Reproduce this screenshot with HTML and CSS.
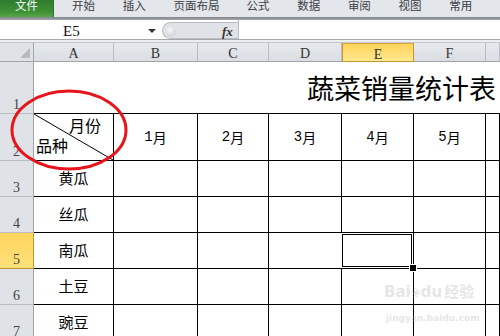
FILE: index.html
```html
<!DOCTYPE html>
<html lang="zh-CN">
<head>
    <meta charset="UTF-8">
    <title>蔬菜销量统计表</title>
    <link rel="stylesheet" href="styles.css">
</head>
<body>
    <div class="tabs">
        <div class="tab file">文件</div>
        <div class="tab">开始</div>
        <div class="tab">插入</div>
        <div class="tab wide">页面布局</div>
        <div class="tab">公式</div>
        <div class="tab">数据</div>
        <div class="tab">审阅</div>
        <div class="tab">视图</div>
        <div class="tab">常用</div>
    </div>
    <div class="sep"></div>
    <div class="fbar">
        <div class="namebox">E5<span class="arrow"></span></div>
        <div class="fxbox"><span class="knob"></span><span class="fx">fx</span></div>
        <div class="input"></div>
    </div>
    <div class="strip"></div>

    <div class="sheet">
        <div class="corner"><span class="tri"></span></div>
        <div class="ch">A</div>
        <div class="ch">B</div>
        <div class="ch">C</div>
        <div class="ch">D</div>
        <div class="ch on">E</div>
        <div class="ch">F</div>
        <div class="ch"></div>

        <div class="rh">1</div>
        <div class="titlecell">蔬菜销量统计表</div>

        <div class="rh">2</div>
        <div class="cell diag">
            <svg class="diagline" viewBox="0 0 100 100" preserveAspectRatio="none"><line x1="0" y1="0" x2="100" y2="100" stroke="#000" stroke-width="1" vector-effect="non-scaling-stroke"/></svg>
            <span class="d-top">月份</span>
            <span class="d-bot">品种</span>
        </div>
        <div class="cell hd"><span class="num">1</span>月</div>
        <div class="cell hd"><span class="num">2</span>月</div>
        <div class="cell hd"><span class="num">3</span>月</div>
        <div class="cell hd"><span class="num">4</span>月</div>
        <div class="cell hd"><span class="num">5</span>月</div>
        <div class="cell hd"></div>

        <div class="rh">3</div>
        <div class="cell lbl">黄瓜</div>
        <div class="cell"></div><div class="cell"></div><div class="cell"></div><div class="cell"></div><div class="cell"></div><div class="cell"></div>

        <div class="rh">4</div>
        <div class="cell lbl">丝瓜</div>
        <div class="cell"></div><div class="cell"></div><div class="cell"></div><div class="cell"></div><div class="cell"></div><div class="cell"></div>

        <div class="rh on">5</div>
        <div class="cell lbl">南瓜</div>
        <div class="cell"></div><div class="cell"></div><div class="cell"></div><div class="cell sel"></div><div class="cell"></div><div class="cell"></div>

        <div class="rh">6</div>
        <div class="cell lbl">土豆</div>
        <div class="cell"></div><div class="cell"></div><div class="cell"></div><div class="cell"></div><div class="cell"></div><div class="cell"></div>

        <div class="rh">7</div>
        <div class="cell lbl">豌豆</div>
        <div class="cell"></div><div class="cell"></div><div class="cell"></div><div class="cell"></div><div class="cell"></div><div class="cell"></div>

        <!-- 红圈标注 -->
        <svg class="mark" width="130" height="90" viewBox="0 0 130 90">
            <ellipse cx="69" cy="44" rx="57" ry="39" fill="none" stroke="#e8141b" stroke-width="3"/>
        </svg>

        <div class="wm">
            <div class="wm-logo">Bai<span class="paw">❀</span>du<span class="wm-cn">经验</span></div>
            <div class="wm-url">jingyan.baidu.com</div>
        </div>
    </div>
</body>
</html>
```
FILE: styles.css
```css
* {
    margin: 0;
    padding: 0;
    box-sizing: border-box;
}
body {
    width: 500px;
    height: 336px;
    overflow: hidden;
    background: #fff;
    font-family: "Noto Sans CJK SC", sans-serif;
}

/* 顶部选项卡 */
.tabs {
    display: flex;
    height: 17px;
    background: #e3e6eb;
    overflow: hidden;
}
.tab {
    width: 52px;
    font-size: 11.5px;
    line-height: 10px;
    color: #3b3f45;
}
.tab.wide {
    width: 75px;
}
.tab.file {
    width: 55px;
    height: 17px;
    margin-right: 18px;
    padding-left: 15px;
    color: #fff;
    background: linear-gradient(#2e7a30, #3f9135 70%, #58a848);
    border-right: 1px solid #2f6f2f;
}
.sep {
    height: 3px;
    background: linear-gradient(#80858c, #a3a7ad);
}

/* 编辑栏 */
.fbar {
    display: flex;
    height: 20px;
    border-bottom: 1px solid #a4a8ae;
}
.namebox {
    position: relative;
    width: 162px;
    padding-left: 63px;
    font-family: "Liberation Serif", serif;
    font-size: 15px;
    line-height: 22px;
    color: #111;
}
.arrow {
    position: absolute;
    left: 148px;
    top: 9px;
    border-left: 4px solid transparent;
    border-right: 4px solid transparent;
    border-top: 4px solid #333;
}
.fxbox {
    position: relative;
    width: 76px;
    margin-top: 2px;
    background: #dfe2e7;
    border: 1px solid #b9bdc3;
    border-right: none;
    border-radius: 9px 0 0 9px;
}
.knob {
    position: absolute;
    left: 3px;
    top: 3px;
    width: 10px;
    height: 11px;
    border-radius: 50%;
    background: radial-gradient(circle at 40% 35%, #f4f5f7, #c5c9ce);
}
.fx {
    position: absolute;
    left: 59px;
    top: 0;
    font-family: "Liberation Serif", serif;
    font-style: italic;
    font-weight: bold;
    font-size: 13px;
    line-height: 17px;
    color: #333;
}
.input {
    flex: 1;
    border-left: 1px solid #b9bdc3;
}
.strip {
    height: 3px;
    background: #eceef1;
    border-bottom: 1px solid #c3c7cd;
}

/* 表格区域 */
.sheet {
    position: relative;
    display: grid;
    grid-template-columns: 34px 80px 84px 71px 73px 72px 72px 1fr;
    grid-template-rows: 19px 52px 47px 36px 36px 36px 36px 36px;
}
.corner {
    position: relative;
    background: #dfe2e7;
    border-right: 1px solid #a0a5ac;
    border-bottom: 1px solid #a0a5ac;
}
.tri {
    position: absolute;
    right: 3px;
    bottom: 3px;
    border-left: 10px solid transparent;
    border-bottom: 10px solid #b6bac0;
}
.ch {
    background: linear-gradient(#e6e9ed, #dadee3);
    border-right: 1px solid #b8bcc2;
    border-bottom: 1px solid #a0a5ac;
    text-align: center;
    font-family: "Liberation Serif", serif;
    font-size: 14px;
    line-height: 21px;
    color: #333;
}
.ch.on {
    background: linear-gradient(#ffd35a, #ffe88e);
    border: 1px solid #c8962f;
    border-top-color: #d9a640;
}
.rh {
    display: flex;
    align-items: flex-end;
    justify-content: center;
    padding-bottom: 1px;
    background: #dfe2e7;
    border-right: 1px solid #a0a5ac;
    border-bottom: 1px solid #b8bcc2;
    font-family: "Liberation Serif", serif;
    font-size: 14px;
    line-height: 14px;
    color: #444;
}
.rh.on {
    background: linear-gradient(#ffd45e, #ffe07a);
    border-right-color: #c8962f;
    border-bottom-color: #c8962f;
}
.titlecell {
    grid-column: 2 / -1;
    padding: 11px 0 0 273px;
    border-bottom: 1px solid #000;
    font-size: 27px;
    font-weight: 400;
    line-height: 30px;
    color: #000;
    white-space: nowrap;
    overflow: hidden;
}
.cell {
    position: relative;
    border-right: 1px solid #000;
    border-bottom: 1px solid #000;
    font-size: 15px;
    color: #000;
}
.hd {
    display: flex;
    align-items: center;
    justify-content: center;
    font-size: 14px;
}
.num {
    font-family: "Liberation Mono", monospace;
    font-size: 14px;
}
.lbl {
    display: flex;
    justify-content: center;
    padding-top: 7px;
    line-height: 20px;
}
.diagline {
    position: absolute;
    left: 0;
    top: 0;
    width: 100%;
    height: 100%;
}
.d-top {
    position: absolute;
    left: 35px;
    top: 1px;
    font-size: 16px;
    line-height: 20px;
}
.d-bot {
    position: absolute;
    left: 2px;
    top: 21px;
    font-size: 16px;
    line-height: 20px;
}

/* 选中单元格 */
.sel::after {
    content: "";
    position: absolute;
    top: 1px;
    left: 0;
    right: 1px;
    bottom: 1px;
    border: 1px solid #000;
    outline: 1px solid #fff;
}
.sel::before {
    content: "";
    position: absolute;
    right: -4px;
    bottom: -4px;
    width: 6px;
    height: 6px;
    background: #000;
    border: 1px solid #fff;
    z-index: 2;
}

/* 标注与水印 */
.mark {
    position: absolute;
    left: 0;
    top: 43px;
    pointer-events: none;
}
.wm {
    position: absolute;
    left: 384px;
    top: 237px;
    color: rgba(190, 190, 190, 0.4);
    font-family: "DejaVu Sans", sans-serif;
    font-weight: bold;
    pointer-events: none;
}
.wm-logo {
    font-size: 15px;
    line-height: 22px;
}
.paw {
    font-size: 12px;
}
.wm-cn {
    font-family: "Noto Sans CJK SC", sans-serif;
    font-size: 15px;
    margin-left: 2px;
}
.wm-url {
    font-size: 9px;
    line-height: 12px;
    margin-top: 8px;
    padding-left: 2px;
}
```
